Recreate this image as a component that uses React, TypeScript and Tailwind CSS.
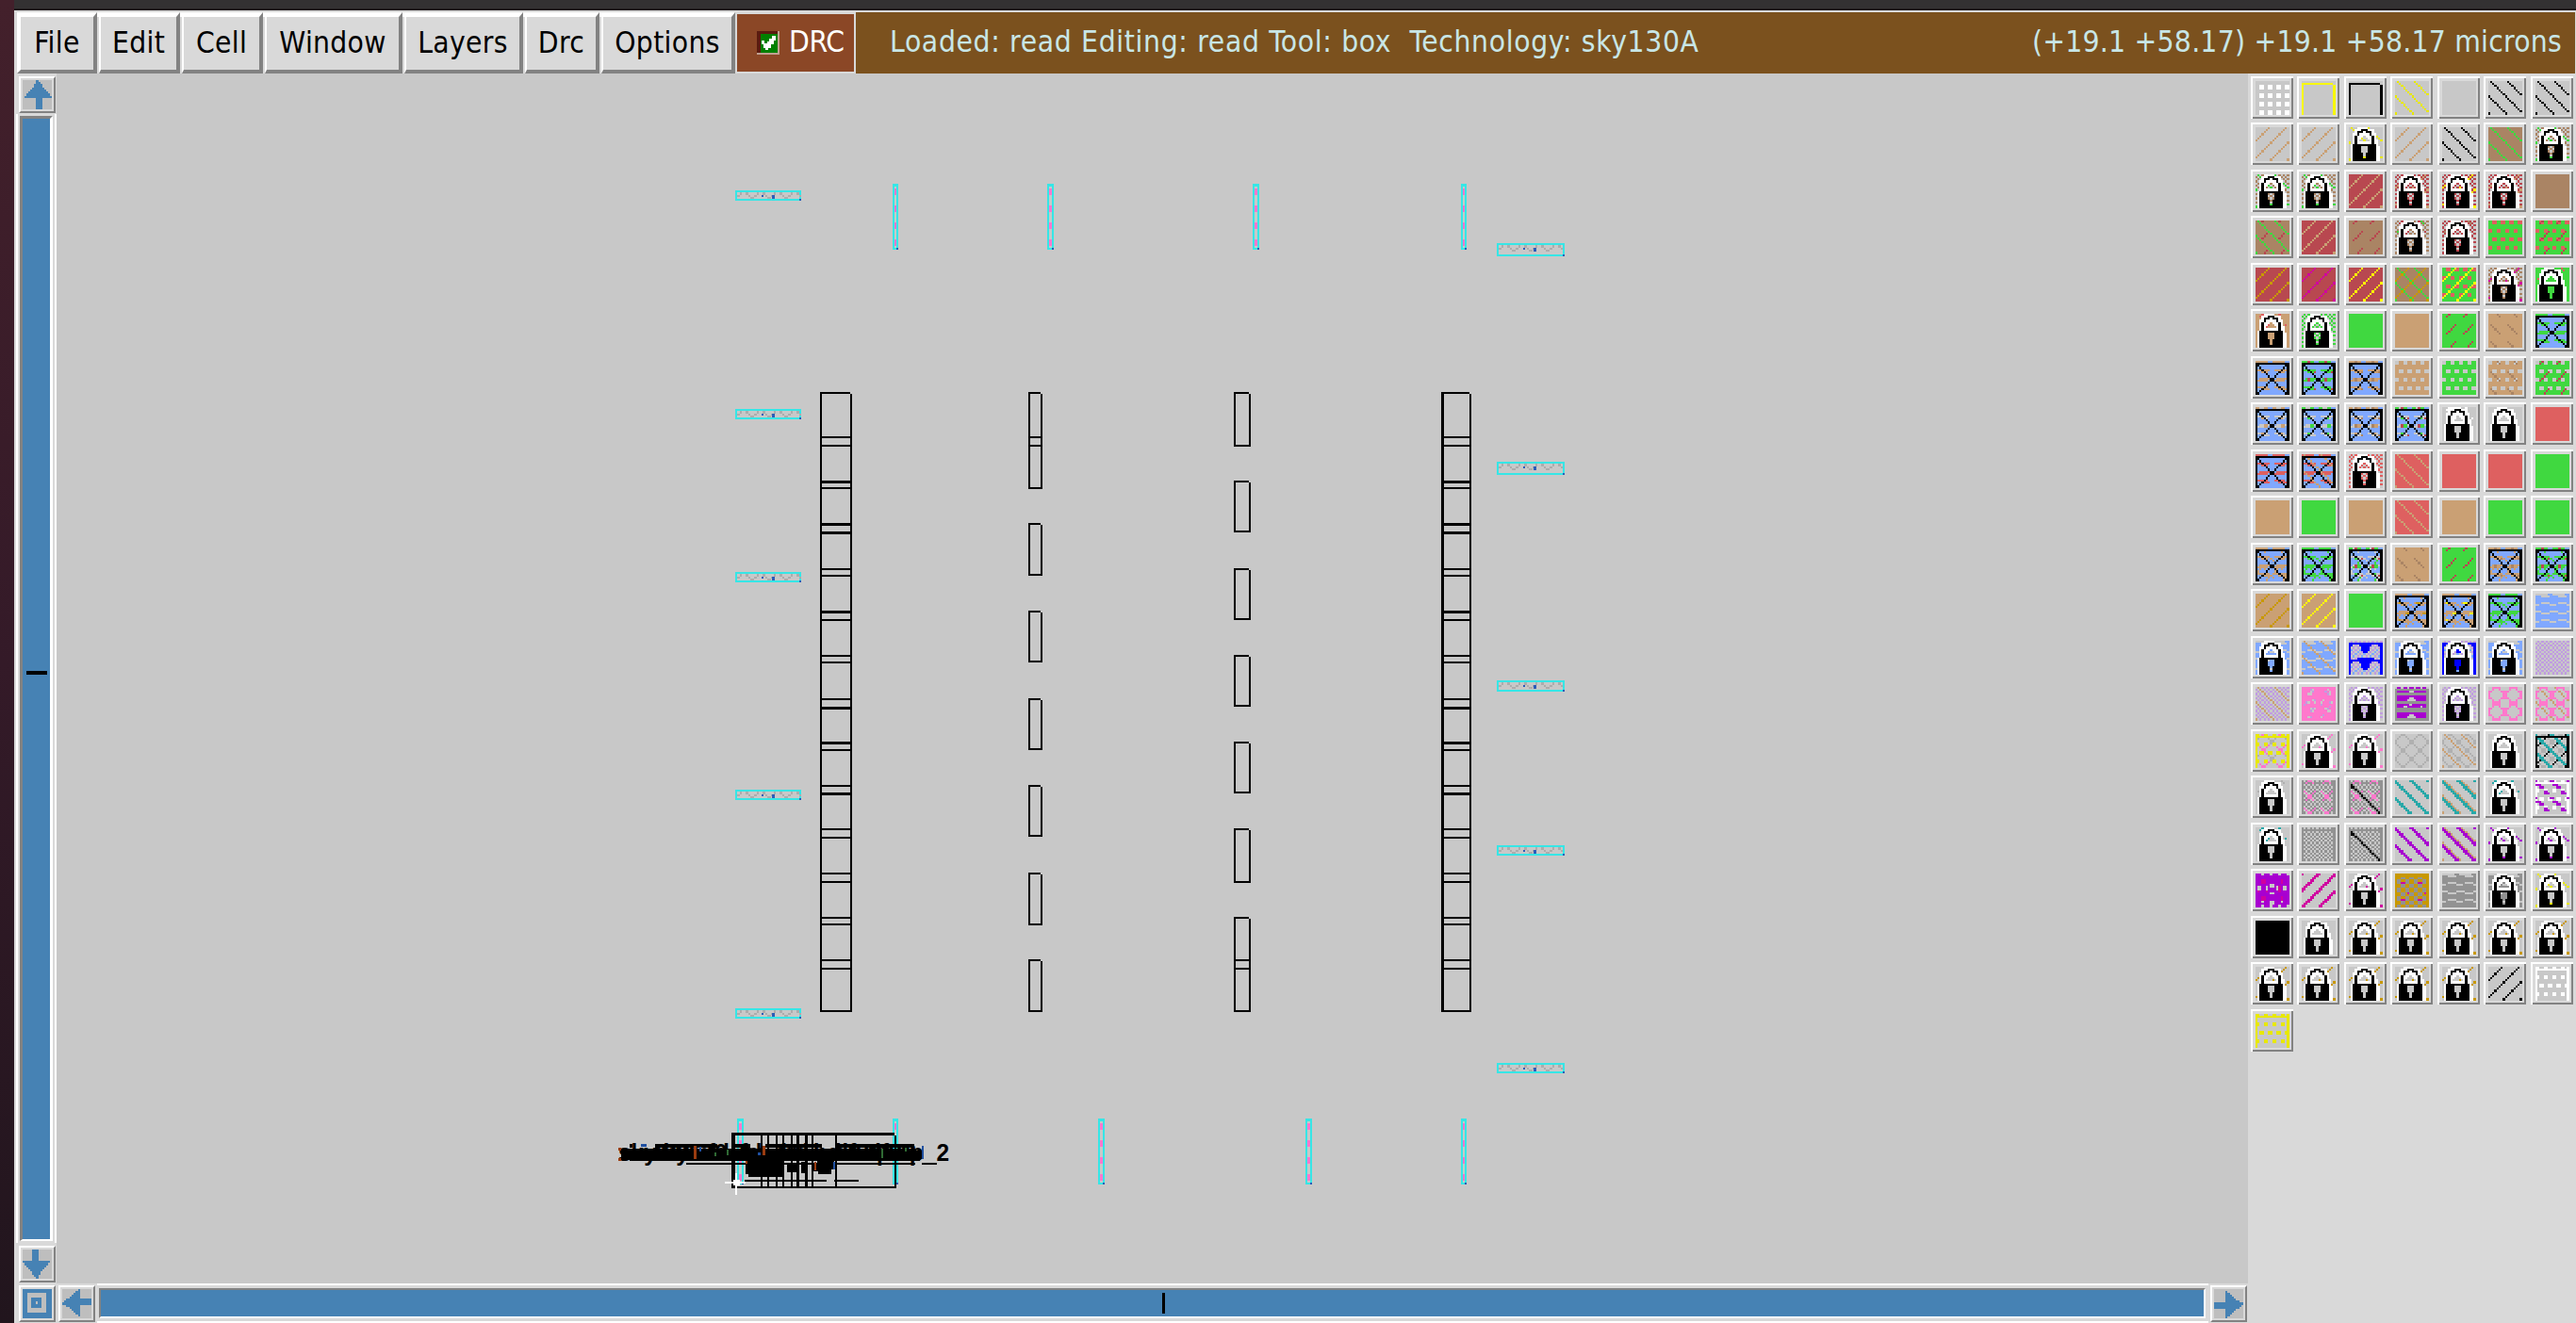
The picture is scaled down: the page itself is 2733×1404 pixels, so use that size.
import React from "react";

/* ---------- stipple patterns on a 16x16 pixel cell ---------- */
type Pat = (x: number, y: number) => boolean;
type Layer = [Pat, string];

const G = "#c8c8c8", T = "#caa074", N = "#40d840", B = "#aa8464", C = "#b84850", R = "#de6060";
const L = "#80a8ff", V = "#c09ce0", P = "#ff78cc", U = "#a800d0", M = "#d000a0", O = "#c89800";
const Y = "#ffff00", Y2 = "#e8e800", E = "#28a8a8", DG = "#929292", LG = "#b0b0b0", K = "#000000", W = "#ffffff", NV = "#0000ff";

const fill: Pat = () => true;
const chk: Pat = (x, y) => ((x + y) & 1) === 1;
const down: Pat = (x, y) => ((x - y) & 7) === 1;
const down2: Pat = (x, y) => [0, 7].includes((x - y) & 7);
const down3: Pat = (x, y) => [0, 1].includes((x - y) & 7);
const up: Pat = (x, y) => ((x + y) & 7) === 6;
const up2: Pat = (x, y) => [7, 0].includes((x + y) & 7);
const gapRows = (y: number) => [5, 6, 7, 0, 1].includes(y & 7);
const segUp: Pat = (x, y) => ((x + y) & 7) === 3 && gapRows(y);
const segDown: Pat = (x, y) => ((x - y) & 7) === 4 && gapRows(y);
const grid: Pat = (x, y) => x % 4 > 1 && y % 4 > 1;
const blocks: Pat = (x, y) => y % 4 < 2 && ((y >> 2) & 1 ? x % 4 < 2 : x % 4 > 1);
const blocks2: Pat = (x, y) => y % 4 < 2 && ((y >> 2) & 1 ? x % 4 > 1 : x % 4 < 2);
const frame: Pat = (x, y) => (y === 1 && x < 15) || (x === 0 && y > 0) || (x === 15 && y > 1);
const box: Pat = (x, y) => y === 1 || (y > 1 && (x === 0 || x === 15)) || (y === 15 && (x === 1 || x === 14));
const cross: Pat = (x, y) => y > 1 && (y === x + 1 || x + y === 16 || (x > 6 && x < 9 && y > 7 && y < 10));
const wave: Pat = (x, y) => {
  if (y === 0) return x % 8 < 6;
  const a = x & 7, b = y & 7;
  return (b === 4 && a > 2 && a < 7) || (b === 5 && (a === 7 || a < 2)) || (b === 0 && (a === 7 || a < 3)) || (b === 1 && a > 2 && a < 7);
};
const bands: Pat = (x, y) => {
  if (y === 0) return x % 8 < 6;
  const a = x & 7;
  return (y === 4 && a > 0 && a < 7) || (y === 5 && a > 2 && a < 6) || (y === 8 && a > 1 && a < 7) || (y === 9 && a < 6) || (y === 12 && a > 0 && a < 6) || (y === 13 && a > 2 && a < 7);
};
const zigzag: Pat = (x, y) => bands(x, y) || (y > 1 && ((x - y) & 7) === 2 && (y & 3) !== 3) || (y > 9 && ((x + y) & 7) === 4);
const bandMid: Pat = (x, y) => ((y === 8 || y === 9) && [4, 5, 12, 13].includes(x)) || (y === 5 && [3, 4, 11, 12].includes(x)) || (y === 12 && [3, 4, 11, 12].includes(x)) || (y === 0 && x % 4 < 2);
const specks: Pat = (x, y) => (y === 8 || y === 9) && [3, 11].includes(x) || (y === 5 && [6, 14].includes(x)) || (y === 13 && [6, 14].includes(x)) || (y === 0 && [3, 11].includes(x));
const specks2: Pat = (x, y) => (y === 9 && [5, 6, 13, 14].includes(x)) || (y === 4 && [2, 3, 10, 11].includes(x)) || (y === 12 && [2, 11].includes(x));
const diamonds: Pat = (x, y) => ((x + y) & 7) === 3 || ((x - y) & 7) === 4;
const circles: Pat = (x, y) => {
  const a = x & 7, b = y & 7;
  const cut = ([3, 4].includes(a) && [1, 6].includes(b)) || ([1, 6].includes(a) && [3, 4].includes(b));
  return (diamonds(x, y) && !cut) || ((b === 7 || b === 0) && a > 1 && a < 6) || ((a === 7 || a === 0) && b > 1 && b < 6);
};
const topBox: Pat = (x, y) => y === 1 || (y === 0 && x % 4 < 2) || x === 0 || x === 15;
const staggered: Pat = (x, y) => y > 3 && (([4, 5].includes(y & 7) && x % 4 < 2) || ([0, 1].includes(y & 7) && x % 4 > 1));
const triangles: Pat = (x, y) => {
  if (y === 0) return false;
  const r = (y - 1) & 7;
  const d = Math.abs(((x + 4) & 7) - 3.5);
  const edge = x < 4 || x > 11;
  return x === 0 || x === 15 || r === 0 || (r === 7 && !edge) || (r < 6 && d <= (edge ? 2.6 - r : 3.6 - r * 0.7));
};
const blueTint: Pat = (x, y) => ((x + y) & 3) === 1 && (y & 7) > 3;
const meshBox: Pat = (x, y) => ((x + y) & 1) === 0 || y === 1 || x === 0 || x === 15;
const longDown: Pat = (x, y) => x > 0 && (y === x + 1 || (y === x + 2 && x < 2)) && y < 16;
const bars: Pat = (x, y) => (y === 0 ? x % 3 !== 0 : x > 0 && x < 15 && ((y === 2 && x !== 7 && x !== 8) || (y > 3 && y < 7) || (y > 7 && y < 10) || (y > 11 && y < 15)));
const barHoles: Pat = (x, y) => (y === 0 && x % 3 === 0) || ((y === 5 || y === 6) && x > (y === 5 ? 6 : 5) && x < (y === 5 ? 9 : 10)) || (y === 13 && (x === 7 || x === 8)) || (y === 14 && x > 5 && x < 10) || (y === 9 && (x === 4 || x === 5 || x === 12)) || (y === 8 && x === 7) || (y === 2 && (x === 7 || x === 8));
const holes: Pat = (x, y) => ([0, 15].includes(y) && x % 4 === 3) || ([5, 6, 9, 13, 14].includes(y) && [7, 8].includes(x)) || ([6, 7].includes(y) && [1, 2, 5, 10, 13, 14].includes(x)) || (y === 13 && [3, 12].includes(x));
const marks: Pat = (x, y) => ([3, 4, 11, 12].includes(y) && [3, 4, 12].includes(x)) || ([6, 7, 8].includes(y) && [1, 5, 11].includes(x));
const thickSegs: Pat = (x, y) => down2(x, y) && ![1, 4, 7].includes(y & 7) || (down2(x + 1, y) && (y & 3) === 2);
const pinkHoles: Pat = (x, y) => ([[5, 1], [4, 2], [4, 3], [3, 3], [5, 6], [6, 7], [3, 7], [12, 1], [13, 2], [13, 3], [10, 6], [9, 7], [14, 7], [4, 10], [5, 11], [6, 10], [11, 10], [12, 11], [13, 11], [3, 14], [9, 14]] as number[][]).some(([a, b]) => a === x && b === y);
const pinkTints: Pat = (x, y) => ([[4, 1], [5, 2], [6, 6], [2, 7], [1, 8], [11, 2], [12, 3], [13, 7], [9, 8], [5, 10], [4, 11], [12, 10], [13, 9], [4, 14], [10, 13]] as number[][]).some(([a, b]) => a === x && b === y);
const weave: Pat = (x, y) => y < 2 || x === 0 || x === 15 || diamonds(x, y) || ((x + y) & 7) === 7 || ((x - y) & 7) === 0;
const magTicks: Pat = (x, y) => ([4, 12].includes(y) && [3, 4, 11, 12].includes(x)) || (y === 9 && [6, 14].includes(x));

const LOCK = [
  "....WWWWW.......",
  "...WWWBBBWWW....",
  "...WBBBWBBBW....",
  "..WWBWWWWWBWW...",
  "..WBWWW.WWWBW...",
  "..WBWW...WWBW...",
  "..WBW.....WBWW..",
  "..WBWWWWWWWBWW..",
  ".WBBBBBBBBBBBW..",
  ".WBBBB...BBBBWW.",
  ".WBBBB...BBBBWW.",
  ".WBBBB...BBBBWW.",
  ".WBBBBB.BBBBBWW.",
  ".WBBBBB.BBBBBWW.",
  ".WBBBBB.BBBBBWW.",
  ".WBBBBBBBBBBBWW.",
];
const lockW: Pat = (x, y) => LOCK[y][x] === "W";
const lockB: Pat = (x, y) => LOCK[y][x] === "B";
const lock: Layer[] = [[lockW, W], [lockB, K]];
const xbox: Layer[] = [[box, K], [cross, K]];

const s = (...l: Layer[]): Layer[] => l;
const goldLock = s([up, O], ...lock);

const SWATCHES: Layer[][] = [
  s([grid, W]), s([frame, "#f8f808"]), s([frame, K]), s([down, Y2]), s(), s([down, K]), s([down, K]),
  s([up, T]), s([up, T]), s([down, Y2], ...lock), s([up, T]), s([down, K]), s([fill, B], [down, N]), s([chk, B], [down, N], ...lock),
  s([chk, B], [down, N], ...lock), s([chk, B], [down, N], ...lock), s([fill, C], [up, T]), s([chk, C], [up, T], ...lock), s([chk, C], [up, Y], ...lock), s([chk, C], [up, T], ...lock), s([fill, B]),
  s([fill, B], [segUp, C], [down, N]), s([fill, C], [up, T]), s([fill, B], [segUp, C]), s([chk, B], [segUp, C], [segDown, N], ...lock), s([chk, C], [segDown, B], ...lock), s([fill, N], [blocks, R]), s([fill, N], [blocks, R], [segUp, C]),
  s([fill, C], [up, O]), s([fill, C], [up, M]), s([fill, C], [up, Y]), s([fill, B], [up, O], [down, N]), s([fill, N], [blocks, R], [up, Y]), s([chk, B], [up, M], ...lock), s([fill, N], [segDown, R], ...lock),
  s([fill, T], [segUp, R], ...lock), s([chk, N], ...lock), s([fill, N]), s([fill, T]), s([fill, N], [segUp, C]), s([fill, T], [segDown, B]), s([fill, L], [bands, N], ...xbox),
  s([fill, L], [bands, T], ...xbox), s([fill, L], [bands, N], [specks, C], ...xbox), s([fill, L], [bands, T], [specks, B], ...xbox), s([fill, T], [blocks2, G]), s([fill, N], [blocks2, G]), s([fill, T], [blocks2, G], [segDown, B]), s([fill, N], [blocks2, G], [segUp, C]),
  s([fill, L], [bands, G], [bandMid, T], ...xbox), s([fill, L], [bands, G], [bandMid, N], ...xbox), s([fill, L], [bands, G], [bandMid, T], [specks, B], ...xbox), s([fill, L], [bands, G], [bandMid, N], [specks, C], ...xbox), s([segUp, W], ...lock), s(...lock), s([fill, R]),
  s([fill, L], [bands, R], ...xbox), s([fill, L], [bands, R], [down, T], ...xbox), s([chk, R], ...lock), s([fill, R], [down, T]), s([fill, R]), s([fill, R]), s([fill, N]),
  s([fill, T]), s([fill, N]), s([fill, T]), s([fill, R], [down, T]), s([fill, T]), s([fill, N]), s([fill, N]),
  s([fill, L], [zigzag, T], ...xbox), s([fill, L], [zigzag, N], ...xbox), s([fill, L], [zigzag, G], [bandMid, N], [segUp, N], [specks, C], ...xbox), s([fill, T], [segDown, B]), s([fill, N], [segUp, C]), s([fill, L], [zigzag, T], [specks, B], ...xbox), s([fill, L], [zigzag, N], [specks, C], ...xbox),
  s([fill, T], [up, O]), s([fill, T], [up, Y]), s([fill, N]), s([fill, L], [zigzag, T], [specks2, O], ...xbox), s([fill, L], [zigzag, T], [specks2, Y], ...xbox), s([fill, L], [zigzag, N], ...xbox), s([fill, L], [wave, G]),
  s([fill, L], [wave, G], ...lock), s([fill, L], [wave, G], [down, T]), s([chk, V], [blueTint, L], [triangles, NV]), s([fill, L], [wave, G], ...lock), s([chk, V], [blueTint, L], [triangles, NV], ...lock), s([fill, L], [wave, G], ...lock), s([chk, V]),
  s([chk, V], [down, T]), s([fill, P], [pinkHoles, G], [pinkTints, V]), s([chk, V], ...lock), s([fill, DG], [bars, U], [barHoles, G]), s([chk, V], ...lock), s([circles, P]), s([down, T], [circles, P]),
  s([diamonds, LG], [segUp, P], [segDown, P], [staggered, Y2], [topBox, Y2]), s([up, P], ...lock), s([up, P], ...lock), s([diamonds, LG]), s([diamonds, LG], [down, T]), s(...lock), s([diamonds, LG], [up, K], [down2, E], [box, K]),
  s([segDown, LG], ...lock), s([meshBox, DG], [segUp, P], [segDown, P]), s([meshBox, DG], [segUp, P], [segDown, P], [longDown, K]), s([down2, E]), s([down3, T], [down2, E]), s([segUp, E], ...lock), s([staggered, W], [topBox, W], [thickSegs, U]),
  s([segUp, E], ...lock), s([meshBox, DG]), s([meshBox, DG], [longDown, K]), s([down2, U]), s([down3, T], [down2, U]), s([down, U], ...lock), s([down, U], ...lock),
  s([fill, U], [marks, M], [holes, G]), s([up2, M]), s([up, M], ...lock), s([fill, DG], [weave, O], [magTicks, M]), s([fill, DG], [wave, G]), s([fill, DG], [wave, G], ...lock), s([down, Y2], ...lock),
  s([fill, K]), s(...lock), goldLock, goldLock, goldLock, goldLock, goldLock,
  goldLock, goldLock, goldLock, goldLock, goldLock, s([up, K]), s([staggered, W], [topBox, W]),
  s([staggered, Y2], [topBox, Y2]),
];

function runs(layers: Layer[]): [string, string][] {
  const paths: Record<string, string> = {};
  for (let y = 0; y < 16; y++) {
    let start = 0;
    let prev = "";
    for (let x = 0; x <= 16; x++) {
      let c = "";
      if (x < 16) {
        c = G;
        for (const [p, col] of layers) if (p(x, y)) c = col;
      }
      if (c !== prev) {
        if (prev) paths[prev] = (paths[prev] || "") + `M${start + 2} ${y + 2}h${x - start}v1h${start - x}z`;
        start = x;
        prev = c;
      }
    }
  }
  return Object.entries(paths);
}

function Swatch({ layers }: { layers: Layer[] }) {
  return (
    <svg className="block h-[45px] w-[45px]" viewBox="0 0 20 20" shapeRendering="crispEdges">
      <path fill="#828282" d="M1 1h19v19h-19z" />
      <path fill="#fff" d="M0 0h20v1h-19v19h-1z" />
      <path fill="#d9d9d9" d="M1 1h18v18h-18z" />
      {runs(layers).map(([c, d]) => (
        <path key={c} fill={c} d={d} />
      ))}
    </svg>
  );
}

/* ---------- menu ---------- */
const MENUS = [
  { label: "File", cls: "w-[85px] border-l-4" },
  { label: "Edit", cls: "w-[86px] border-l-2" },
  { label: "Cell", cls: "w-[86px] border-l-2" },
  { label: "Window", cls: "w-[146px] border-l-2" },
  { label: "Layers", cls: "w-[126px] border-l-2" },
  { label: "Drc", cls: "w-[79px] border-l-2" },
  { label: "Options", cls: "w-[142px] border-l-2" },
];

function MenuBar() {
  return (
    <div className="flex h-[67px] border-t-2 border-[#d9d9d9] pl-[3px] pr-[1px] text-[31.5px] leading-none">
      <div className="flex gap-[2px] bg-[linear-gradient(#fff_5px,#d9d9d9_5px)]">
        {MENUS.map((m) => (
          <button
            key={m.label}
            className={`${m.cls} flex h-[65px] items-center justify-center border-t-[5px] border-r-4 border-b-4 border-t-white border-r-[#828282] border-b-[#828282] border-l-white pb-[1px] tracking-[0.3px] text-black`}
          >
            {m.label}
          </button>
        ))}
      </div>
      <div className="mt-[2px] ml-[2px] flex h-[61px] w-[124px] items-center bg-[#8b4726] pl-[21px]">
        <svg className="h-[25px] w-[24px]" viewBox="0 0 24 25" shapeRendering="crispEdges">
          <path fill="#5a1c10" d="M0 0h24v25h-24z" />
          <path fill="#c0a090" d="M22 0h2v25h-24v-2h22z" />
          <path fill="#008000" d="M4 3h18v20h-18z" />
          <path fill="#fff" d="M5 10h3v3h3v-2h2v-3h3v-3h4v5h-2v4h-3v4h-3v2h-3v-2h-2v-4h-2z" />
        </svg>
        <span className="ml-[10px] pb-[1px] tracking-[-0.4px] text-white">DRC</span>
      </div>
      <div className="ml-[2px] flex flex-1 items-center justify-between bg-[#7b511e] pr-[14px] pb-[1px] pl-[36px] whitespace-pre text-[#c8e6e6]">
        <span className="tracking-[0.65px]">Loaded: read Editing: read Tool: box  Technology: sky130A</span>
        <span className="tracking-[0.24px]">(+19.1 +58.17) +19.1 +58.17 microns</span>
      </div>
    </div>
  );
}

/* ---------- scroll controls ---------- */
const ARROW = "M7 0h1v1h1v1h1v2h1v1h1v1h1v1h1v1h1v1h-5v6h-3v-6h-6v-1h1v-1h1v-1h1v-1h1v-1h1v-2h1z";

function ArrowButton({ turn }: { turn: string }) {
  return (
    <div className="h-[39px] w-[39px] border-2 border-t-white border-r-[#828282] border-b-[#828282] border-l-white bg-[#d9d9d9] p-[2px]">
      <svg className={`block h-[31px] w-[31px] bg-[#bebebe] ${turn}`} viewBox="0 0 15 15" shapeRendering="crispEdges">
        <path fill="#4682b4" d={ARROW} />
      </svg>
    </div>
  );
}

/* ---------- layout drawing ---------- */
const ROWS = [
  [463, 472], [510, 517], [555, 564], [603, 610], [648, 657], [695, 702], [741, 750],
  [787, 795], [833, 841], [879, 888], [926, 935], [973, 980], [1018, 1027],
];
const B_BOXES = [[416, 519], [555, 611], [648, 703], [741, 796], [833, 888], [926, 982], [1018, 1074]];
const C_BOXES = [[416, 474], [510, 565], [603, 658], [695, 750], [787, 842], [879, 937], [973, 1074]];
const V_PINS: [number, number, number][] = [
  [947, 195, 6], [1111, 195, 7], [1329, 195, 7], [1550, 195, 6],
  [782, 1187, 7], [947, 1187, 6], [1165, 1187, 7], [1385, 1187, 7], [1550, 1187, 6],
];
const H_PINS: [number, number, number, number][] = [
  [780, 202, 70, 11], [780, 434, 70, 11], [780, 607, 70, 11], [780, 838, 70, 11], [780, 1070, 70, 11],
  [1588, 258, 72, 14], [1588, 490, 72, 14], [1588, 722, 72, 12], [1588, 897, 72, 11], [1588, 1128, 72, 11],
];

function Outline({ x, y, w, h, left = 2 }: { x: number; y: number; w: number; h: number; left?: number }) {
  return <path d={`M${x} ${y}h${w - 2}v2h2v${h - 2}h${-w}z M${x + left} ${y + 2}v${h - 4}h${w - 2 - left}v${4 - h}z`} fillRule="evenodd" />;
}

function HPin({ x, y, w, h }: { x: number; y: number; w: number; h: number }) {
  const zig = [0, 1, 2, 3].map((i) => i * 18).filter((d) => d + 14 < w);
  return (
    <g>
      <path fill="#36e6e6" d={`M${x} ${y}h${w}v${h}h${-w}z M${x + 2} ${y + 2}v${h - 4}h${w - 4}v${4 - h}z`} fillRule="evenodd" />
      {zig.map((d) => (
        <path key={d} fill="#acacac" d={`M${x + 2 + d} ${y + 5}h3v-3h2v3h-2v2h-3z M${x + 11 + d} ${y + 2}h3v3h2v2h${d === 54 ? 0 : 4}v2h${d === 54 ? 0 : -4}v-2h-2v-2h-3z`} />
      ))}
      <path fill="#2c5cb8" d={`M${x + 28} ${y + 5}h2v2h-2z M${x + 39} ${y + 5}h3v4h-3z M${x + w - 2} ${y + h - 2}h2v2h-2z`} />
    </g>
  );
}

function VPin({ x, y, w }: { x: number; y: number; w: number }) {
  return (
    <g>
      <path fill="#36e6e6" d={`M${x} ${y}h${w}v70h${-w}z M${x + 2} ${y + 3}v65h${w - 4}v-65z`} fillRule="evenodd" />
      {[5, 23, 41, 59].map((d) => (
        <path key={d} fill="#ff78cc" d={`M${x + 2} ${y + d}h${w - 4}v7h${4 - w}z`} />
      ))}
      <path fill="#2c5cb8" d={`M${x + w - 2} ${y + 68}h2v2h-2z`} />
    </g>
  );
}

const CELL_NAMES = [
  { x: 656, w: 316 },
  { x: 690, w: 317 },
];

function LayoutView() {
  return (
    <svg className="block h-[1284px] w-[2325px] bg-[#c8c8c8]" viewBox="60 78 2325 1284" shapeRendering="crispEdges">
      {V_PINS.map(([x, y, w]) => <VPin key={`${x}-${y}`} x={x} y={y} w={w} />)}
      {H_PINS.map(([x, y, w, h]) => <HPin key={`${x}-${y}`} x={x} y={y} w={w} h={h} />)}
      <Outline x={870} y={416} w={34} h={658} />
      <Outline x={1529} y={416} w={32} h={658} left={3} />
      {ROWS.map(([a, b]) => {
        const thick = a === 510 || a === 555 || a === 648 || a === 787 ? 3 : 2;
        const thick2 = b === 564 || b === 750 || b === 841 ? 3 : 2;
        return (
          <path
            key={a}
            d={`M870 ${a}h34v${thick}h-34z M870 ${b}h34v${thick2}h-34z M1529 ${a}h32v${thick}h-32z M1529 ${b}h32v${thick2}h-32z`}
          />
        );
      })}
      {B_BOXES.map(([a, b]) => <Outline key={a} x={1091} y={a} w={15} h={b - a} />)}
      {C_BOXES.map(([a, b]) => <Outline key={a} x={1309} y={a} w={18} h={b - a} />)}
      <path d="M1091 463h15v2h-15z M1091 472h15v2h-15z M1309 1018h18v2h-18z M1309 1027h18v2h-18z" />
      {/* placed standard cells and their labels */}
      <path
        fillRule="evenodd"
        d="M776 1202h173v3h2v56h-175z M780 1205v54h169v-54z"
      />
      <path d="M807 1205h2v54h-2z M814 1205h2v54h-2z M823 1205h2v54h-2z M830 1205h2v54h-2z M839 1205h2v54h-2z M845 1205h3v54h-3z M854 1205h3v54h-3z M861 1205h2v54h-2z M886 1205h2v54h-2z" />
      <path d="M728 1234h243v2h-243z M978 1234h16v2h-16z M790 1252h87v2h-87z M885 1252h26v2h-26z" />
      <g fontFamily="Liberation Sans, Arial, sans-serif" fontWeight="700" fontSize="25">
        {CELL_NAMES.map((n) => (
          <text key={n.x} x={n.x} y={1232} textLength={n.w} lengthAdjust="spacingAndGlyphs">
            sky130_fd_sc_hd__dfxtp_2
          </text>
        ))}
      </g>
      <path d="M659 1220h3v-1h310v2h6v9h-2v2h-308v-1h-9z M668 1214h3v4h-3z M695 1214h66v4h-66z M776 1214h20v4h-20z M812 1214h60v4h-60z M886 1214h84v4h-84z" />
      <path d="M792 1232h40v17h-38v-3h-3v-12h1z M835 1236h12v8h-12z M850 1233h6v12h-6z M863 1236h4v-4h18v9h-3v5h-14v-3h-5z" />
      <path fill="#9a3c10" d="M656 1218h3v3h-3z M656 1229h3v3h-3z M736 1216h3v14h-3z M809 1216h3v10h-3z M791 1232h2v3h-2z M864 1233h2v9h-2z" />
      <path fill="#2050a0" d="M680 1214h6v3h-6z M742 1217h2v5h-2z M804 1223h3v3h-3z M884 1233h2v8h-2z M978 1216h2v14h-2z" />
      <path fill="#2f6a34" d="M758 1223h2v4h-2z M771 1220h2v6h-2z M935 1219h2v10h-2z M960 1218h2v4h-2z" />
      <path fill="#fff" d="M769 1254h22v2h-22z M780 1245h2v23h-2z M778 1252h7v6h-7z" />
    </svg>
  );
}

export default function App() {
  return (
    <div className="flex h-[1404px] w-[2733px] overflow-hidden bg-[#d9d9d9] font-['DejaVu_Sans_Condensed','DejaVu_Sans',sans-serif]">
      <div className="w-[15px] shrink-0 bg-linear-to-b from-[#43202b] via-[#341a28] to-[#21151d]" />
      <div className="flex w-[2718px] flex-col">
        <div className="h-[11px] shrink-0 border-b-2 border-[#1f1a1c] bg-[#333132]" />
        <MenuBar />
        <div className="flex h-[1326px]">
          <div className="flex w-[2370px] flex-col">
            <div className="flex h-[1284px]">
              <div className="flex w-[45px] flex-col items-start pt-[3px]">
                <div className="ml-[5px]">
                  <ArrowButton turn="" />
                </div>
                <div className="mt-[1px] ml-[2px] flex h-[1198px] w-[43px] border-x-2 border-white px-[2px] pt-[2px] pb-[2px]">
                  <div className="flex flex-1 items-center justify-center border-t-[3px] border-r-[3px] border-b-2 border-l-[3px] border-t-[#828282] border-r-white border-b-white border-l-[#828282] bg-[#4682b4]">
                    <div className="h-1 w-[22px] -translate-y-[7px] bg-black" />
                  </div>
                </div>
                <div className="mt-[3px] ml-[5px]">
                  <ArrowButton turn="rotate-180" />
                </div>
              </div>
              <LayoutView />
            </div>
            <div className="flex h-[42px] pl-[5px]">
              <div className="mt-[2px] h-[39px] w-[39px] border-2 border-t-white border-r-[#828282] border-b-[#828282] border-l-white p-[2px]">
                <svg className="block h-[31px] w-[31px]" viewBox="0 0 31 31" shapeRendering="crispEdges">
                  <path fill="#4682b4" d="M0 0h31v31h-31z" />
                  <path fill="#bebebe" d="M5 4h20v21h-20z" />
                  <path fill="#4682b4" d="M9 9h11v11h-11z" />
                  <path fill="#bebebe" d="M14 13h2v3h-2z" />
                </svg>
              </div>
              <div className="mt-[2px] ml-[3px]">
                <ArrowButton turn="-rotate-90" />
              </div>
              <div className="ml-[2px] flex w-[2240px] border-y-2 border-white py-[3px] pr-[3px] pl-[2px]">
                <div className="flex flex-1 items-center border-t-2 border-r-2 border-b-2 border-l-2 border-t-[#828282] border-r-white border-b-white border-l-[#828282] bg-[#4682b4]">
                  <div className="ml-[1126px] h-[22px] w-[3px] bg-black" />
                </div>
              </div>
              <div className="mt-[2px] ml-[2px]">
                <ArrowButton turn="rotate-90" />
              </div>
            </div>
          </div>
          <div className="grid h-fit grid-cols-[repeat(7,49.5px)] gap-y-[4.5px] pt-[2.6px] pl-[2.6px]">
            {SWATCHES.map((layers, i) => (
              <Swatch key={i} layers={layers} />
            ))}
          </div>
        </div>
      </div>
    </div>
  );
}
